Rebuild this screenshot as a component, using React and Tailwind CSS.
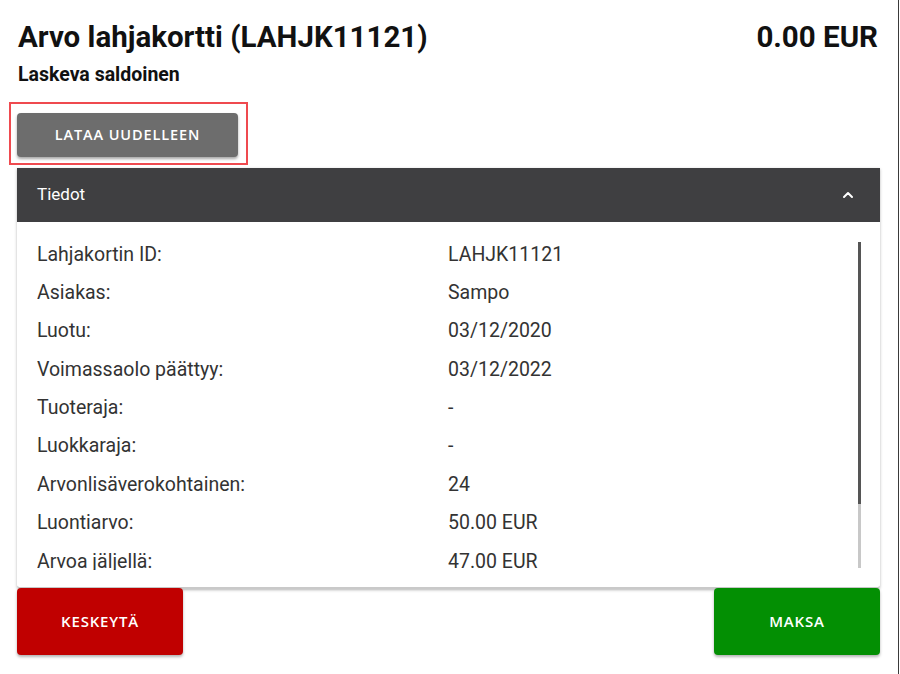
import React from "react";

const rows = [
  ["Lahjakortin ID:", "LAHJK11121"],
  ["Asiakas:", "Sampo"],
  ["Luotu:", "03/12/2020"],
  ["Voimassaolo päättyy:", "03/12/2022"],
  ["Tuoteraja:", "-"],
  ["Luokkaraja:", "-"],
  ["Arvonlisäverokohtainen:", "24"],
  ["Luontiarvo:", "50.00 EUR"],
  ["Arvoa jäljellä:", "47.00 EUR"],
];

export default function App() {
  return (
    <div className="w-[899px] h-[674px] bg-white border-r border-[#3a3a3a] font-['Roboto',sans-serif] overflow-hidden">
      <div className="pl-[18px] pr-[20px]">
        {/* Header */}
        <div className="flex justify-between items-start pt-[17px]">
          <h1 className="text-[29.5px] leading-[40px] font-bold text-[#111]">
            Arvo lahjakortti (LAHJK11121)
          </h1>
          <div className="text-[29.5px] leading-[40px] font-bold text-[#111]">
            0.00 EUR
          </div>
        </div>
        <div className="text-[19.5px] leading-[22px] font-bold text-[#111] mt-[7px]">
          Laskeva saldoinen
        </div>
      </div>

      {/* Reload button */}
      <div className="ml-[9px] mt-[16px] w-[239px] h-[63px] border-2 border-[#ef4a4f] pl-[6px] pt-[9px]">
        <button className="w-[221px] h-[44px] rounded bg-[#6d6d6d] text-white text-[14.5px] font-semibold tracking-[0.9px] shadow-[0_2px_3px_rgba(0,0,0,0.35)] font-['Open_Sans',sans-serif]">
          LATAA UUDELLEEN
        </button>
      </div>

      {/* Accordion */}
      <div className="mx-[17px] mt-[3px] w-[863px] shadow-[0_1px_3px_rgba(0,0,0,0.3)] rounded-b">
        <div className="h-[54px] bg-[#3f3f41] flex items-center justify-between pl-[20px] pr-[24px]">
          <span className="text-white text-[17px]">Tiedot</span>
          <svg width="16" height="16" viewBox="0 0 24 24" fill="none" stroke="white" strokeWidth="3" strokeLinecap="round" strokeLinejoin="round">
            <path d="M6 15l6-6 6 6" />
          </svg>
        </div>
        <div className="bg-white pt-[13px] pb-[17px] pl-[20px] pr-[19px] flex border-b-2 border-[#c9c9c9] rounded-b">
          <div className="flex-1 h-[335px] overflow-hidden">
            {rows.map(([label, value]) => (
              <div key={label} className="flex h-[38.375px] items-center text-[19.5px] text-[#333]">
                <span className="w-[411px]">{label}</span>
                <span>{value}</span>
              </div>
            ))}
          </div>
          <div className="w-[3px] mt-[7px] mb-[2px] bg-[#c8c8c8] flex flex-col">
            <div className="h-[262px] bg-[#555]" />
          </div>
        </div>
      </div>

      {/* Actions */}
      <div className="flex justify-between mx-[17px] w-[863px] mt-[-1px]">
        <button className="w-[166px] h-[67px] rounded bg-[#c00000] text-white text-[15px] font-semibold tracking-[0.8px] font-['Open_Sans',sans-serif] shadow-[0_2px_3px_rgba(0,0,0,0.3)]">
          KESKEYTÄ
        </button>
        <button className="w-[166px] h-[67px] rounded bg-[#038f03] text-white text-[15px] font-semibold tracking-[0.8px] font-['Open_Sans',sans-serif] shadow-[0_2px_3px_rgba(0,0,0,0.3)]">
          MAKSA
        </button>
      </div>
    </div>
  );
}
